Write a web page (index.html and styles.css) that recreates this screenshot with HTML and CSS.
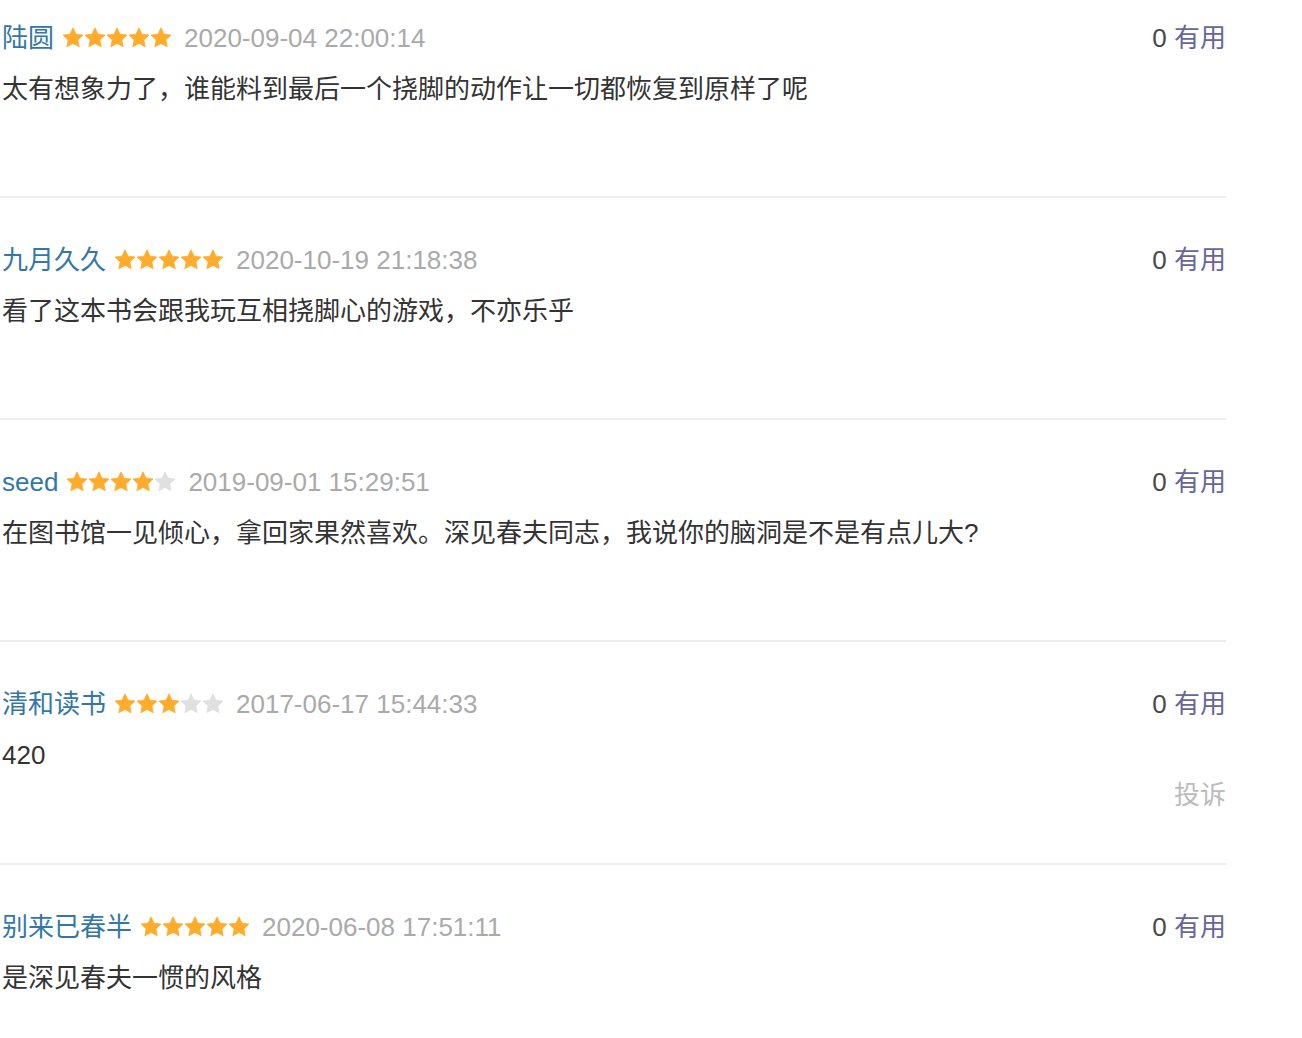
FILE: index.html
```html
<!DOCTYPE html>
<html lang="zh-CN">
<head>
<meta charset="utf-8">
<title>短评</title>
<link rel="stylesheet" href="styles.css">
</head>
<body>
<svg class="defs" width="0" height="0" aria-hidden="true">
  <defs>
    <polygon id="star" points="11,0.8 14,7.17 20.99,8.06 15.85,12.88 17.17,19.79 11,16.4 4.83,19.79 6.15,12.88 1.01,8.06 8,7.17" stroke-linejoin="round"/>
  </defs>
</svg>
<div class="comments">
  <div class="item">
    <div class="header">
      <div class="info">
        <a class="name">陆圆</a>
        <svg class="stars" width="110" height="22" viewBox="0 0 110 22"><use href="#star" class="on"/><use href="#star" x="22" class="on"/><use href="#star" x="44" class="on"/><use href="#star" x="66" class="on"/><use href="#star" x="88" class="on"/></svg>
        <span class="time">2020-09-04 22:00:14</span>
      </div>
      <div class="vote"><span class="count">0</span> <a class="useful">有用</a></div>
    </div>
    <p class="content">太有想象力了，谁能料到最后一个挠脚的动作让一切都恢复到原样了呢</p>
  </div>
  <div class="item">
    <div class="header">
      <div class="info">
        <a class="name">九月久久</a>
        <svg class="stars" width="110" height="22" viewBox="0 0 110 22"><use href="#star" class="on"/><use href="#star" x="22" class="on"/><use href="#star" x="44" class="on"/><use href="#star" x="66" class="on"/><use href="#star" x="88" class="on"/></svg>
        <span class="time">2020-10-19 21:18:38</span>
      </div>
      <div class="vote"><span class="count">0</span> <a class="useful">有用</a></div>
    </div>
    <p class="content">看了这本书会跟我玩互相挠脚心的游戏，不亦乐乎</p>
  </div>
  <div class="item">
    <div class="header">
      <div class="info">
        <a class="name">seed</a>
        <svg class="stars" width="110" height="22" viewBox="0 0 110 22"><use href="#star" class="on"/><use href="#star" x="22" class="on"/><use href="#star" x="44" class="on"/><use href="#star" x="66" class="on"/><use href="#star" x="88" class="off"/></svg>
        <span class="time">2019-09-01 15:29:51</span>
      </div>
      <div class="vote"><span class="count">0</span> <a class="useful">有用</a></div>
    </div>
    <p class="content">在图书馆一见倾心，拿回家果然喜欢。深见春夫同志，我说你的脑洞是不是有点儿大?</p>
  </div>
  <div class="item item-report">
    <div class="header">
      <div class="info">
        <a class="name">清和读书</a>
        <svg class="stars" width="110" height="22" viewBox="0 0 110 22"><use href="#star" class="on"/><use href="#star" x="22" class="on"/><use href="#star" x="44" class="on"/><use href="#star" x="66" class="off"/><use href="#star" x="88" class="off"/></svg>
        <span class="time">2017-06-17 15:44:33</span>
      </div>
      <div class="vote"><span class="count">0</span> <a class="useful">有用</a></div>
    </div>
    <p class="content">420</p>
    <div class="report"><a>投诉</a></div>
  </div>
  <div class="item">
    <div class="header">
      <div class="info">
        <a class="name">别来已春半</a>
        <svg class="stars" width="110" height="22" viewBox="0 0 110 22"><use href="#star" class="on"/><use href="#star" x="22" class="on"/><use href="#star" x="44" class="on"/><use href="#star" x="66" class="on"/><use href="#star" x="88" class="on"/></svg>
        <span class="time">2020-06-08 17:51:11</span>
      </div>
      <div class="vote"><span class="count">0</span> <a class="useful">有用</a></div>
    </div>
    <p class="content">是深见春夫一惯的风格</p>
  </div>
</div>
</body>
</html>
```
FILE: styles.css
```css
html, body {
  margin: 0;
  padding: 0;
  background: #fff;
}
body {
  font-family: "Liberation Sans", "Noto Sans CJK SC", sans-serif;
  font-size: 26px;
  color: #333;
}
.defs {
  position: absolute;
  width: 0;
  height: 0;
  overflow: hidden;
}
.comments {
  width: 1226px;
}
.item {
  padding: 42px 0 85px 2px;
  border-bottom: 2px solid #eee;
}
.item:first-child {
  padding-top: 18px;
}
.item-report {
  padding-bottom: 50px;
}
.header {
  display: flex;
  justify-content: space-between;
  align-items: center;
  height: 40px;
}
.info {
  display: flex;
  align-items: center;
}
.name {
  color: #3377aa;
  line-height: 40px;
}
.stars {
  display: block;
  margin-left: 8px;
  margin-right: 12px;
}
.stars .on { fill: #ffac2d; stroke: #ffac2d; stroke-width: 0.8; }
.stars .off { fill: #e0e0e0; stroke: #e0e0e0; stroke-width: 0.8; }
.time {
  color: #aaa;
  line-height: 40px;
}
.vote {
  line-height: 40px;
  color: #494949;
}
.useful {
  color: #666699;
}
.content {
  margin: 9px 0 0;
  line-height: 44px;
  color: #333;
}
.report {
  text-align: right;
  line-height: 36px;
}
.report a {
  color: #bbb;
}
```
